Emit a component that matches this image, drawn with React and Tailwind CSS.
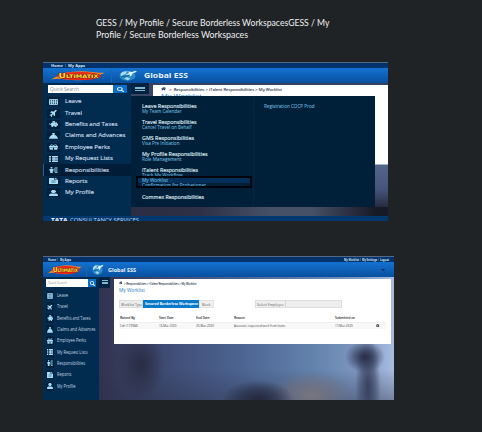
import React, { useLayoutEffect, useRef, useState } from "react";
import { FaPlane, FaPiggyBank, FaGift, FaUser, FaSearch, FaHome, FaFileAlt, FaCog } from "react-icons/fa";

// A single line of text set to a fixed measure.
function Fit({ w, className = "", children }) {
  const ref = useRef(null);
  const [scale, setScale] = useState(1);
  useLayoutEffect(() => {
    if (ref.current && ref.current.offsetWidth) {
      const own = getComputedStyle(ref.current).width;
      setScale(w / parseFloat(own));
    }
  }, [w, children]);
  return (
    <span className="block shrink-0" style={{ width: w }}>
      <span
        ref={ref}
        className={"block w-max origin-left whitespace-nowrap " + className}
        style={{ transform: `scaleX(${scale})` }}
      >
        {children}
      </span>
    </span>
  );
}

function CalendarIcon({ className }) {
  return (
    <svg viewBox="0 0 18 14" preserveAspectRatio="none" className={className} fill="none" stroke="currentColor" strokeWidth="2">
      <path d="M1 1h16v12H1zM1 5h16M1 9h16M5 1v12M9 1v12M13 1v12" />
    </svg>
  );
}

function ClaimsIcon({ className }) {
  return (
    <svg viewBox="0 0 18 16" preserveAspectRatio="none" className={className} fill="currentColor">
      <path d="M6 0h6l-1.5 4C15 6 17 10 18 15H0C1 10 3 6 7.500 4z" />
    </svg>
  );
}

function ListIcon({ className }) {
  return (
    <svg viewBox="0 0 18 16" preserveAspectRatio="none" className={className} fill="currentColor">
      <path d="M0 0h4v4H0zM0 6h4v4H0zM0 12h4v4H0zM6 0h12v4H6zM6 6h12v4H6zM6 12h12v4H6z" />
      <path d="M9 0h2v16H9z" />
    </svg>
  );
}

function DutiesIcon({ className }) {
  return (
    <svg viewBox="0 0 18 16" preserveAspectRatio="none" className={className} fill="currentColor">
      <circle cx="5" cy="2.200" r="2.200" />
      <path d="M1 5h8v5H7.500v6h-5v-6H1zM12 1h5v3h-5zM12 6.500h5v3h-5zM12 12h5v3h-5z" />
      <path d="M10 2h1v12h-1z" />
    </svg>
  );
}

function Stretch({ icon: Icon, className }) {
  return <Icon preserveAspectRatio="none" className={className} />;
}

function MenuIcon({ name, className }) {
  if (name === "leave") return <CalendarIcon className={className} />;
  if (name === "claims") return <ClaimsIcon className={className} />;
  if (name === "list") return <ListIcon className={className} />;
  if (name === "duties") return <DutiesIcon className={className} />;
  const icons = { travel: FaPlane, benefits: FaPiggyBank, perks: FaGift, reports: FaFileAlt, profile: FaUser };
  return <Stretch icon={icons[name]} className={className + (name === "travel" ? " -rotate-45" : "")} />;
}

const items = [
  ["leave", "Leave", 16.5, 11],
  ["travel", "Travel", 17, 11],
  ["benefits", "Benefits and Taxes", 52.5, 33.5],
  ["claims", "Claims and Advances", 60.5, 38.5],
  ["perks", "Employee Perks", 45, 29],
  ["list", "My Request Lists", 48, 30.5],
  ["duties", "Responsibilities", 44, 28],
  ["reports", "Reports", 22.5, 14.5],
  ["profile", "My Profile", 29, 18.5],
];

function Ultimatix({ className }) {
  return (
    <svg viewBox="0 0 54 11" preserveAspectRatio="none" className={className}>
      <path d="M0 9Q8 5 14 2Q28-1 41 1Q47 2 54 2Q48 4 45 7Q34 12 14 9Q7 8 0 9Z" fill="#f58a22" />
      <ellipse cx="28" cy="5.500" rx="22" ry="4.500" fill="#e5281b" />
      <text
        x="7.500" y="8.200" textLength="40" lengthAdjust="spacingAndGlyphs"
        fontFamily="DejaVu Sans, sans-serif" fontWeight="bold" fontSize="7.500"
        fill="#ffe33b" stroke="#5a1708" strokeWidth=".7" paintOrder="stroke" className="[font-variant:small-caps]"
      >
        Ultimatix
      </text>
    </svg>
  );
}

function Globe({ className }) {
  return (
    <svg viewBox="0 0 18 12" preserveAspectRatio="none" className={className}>
      <ellipse cx="8.500" cy="6.300" rx="8" ry="5.400" fill="#2a8dc8" />
      <path d="M1.500 4Q4 1 8 1.500L7 4 4 5.500 2 7zM5 9l3-1 3 1-2 2.500z" fill="#a9dcf2" />
      <path d="M2 7.500Q9 8 15 2.500" fill="none" stroke="#0d4f94" strokeWidth=".8" />
      <path d="M18 1.800L14 3.500 12 6.500 10.500 7 11 5 6 5.500 10.500 3 8 1.500 13 2.200 16 .8z" fill="#e4f6ff" />
    </svg>
  );
}

function Burger({ className }) {
  return (
    <span className={"flex flex-col justify-between " + className}>
      <span className="h-px bg-[#86b5ce]" />
      <span className="h-px bg-[#86b5ce]" />
      <span className="h-px bg-[#86b5ce]" />
    </span>
  );
}

function WideSidebar() {
  return (
    <aside className="flex h-[133px] w-[88px] shrink-0 flex-col bg-[#012c4f] pt-[2px]">
      <div className="ml-[5px] flex h-2 w-[79px]">
        <div className="flex w-[65px] items-center bg-white pl-[2px]">
          <Fit w={29} className="text-[4.5px] leading-[8px] text-[#8b8f94]">Quick Search</Fit>
        </div>
        <div className="flex flex-1 items-center justify-center bg-[#0b6fca]">
          <Stretch icon={FaSearch} className="h-[5px] w-[7px] text-white" />
        </div>
      </div>
      <nav className="mt-[3px] flex flex-col">
        {items.map(([icon, label, w]) => (
          <div
            key={label}
            className={
              "flex h-[11.4px] items-center border-l pl-[3px] " +
              (icon === "duties" ? "border-[#1668ad] bg-[#001c36]" : "border-transparent")
            }
          >
            <span className="mr-[4.5px] flex h-[9px] w-[13px] items-center justify-center bg-[#001f3b]">
              <MenuIcon name={icon} className="h-[6px] w-[9px] text-[#a5dcf7]" />
            </span>
            <Fit w={w} className="text-[5.5px] leading-[11px] text-[#c6d8e6] [-webkit-text-stroke:0.15px]">{label}</Fit>
          </div>
        ))}
      </nav>
    </aside>
  );
}

const groups = [
  ["Leave Responsibilities", 54.5, "My Team Calendar", 39.5],
  ["Travel Responsibilities", 54.5, "Cancel Travel on Behalf", 49.5],
  ["GMS Responsibilities", 52, "Visa Pre Initiation", 37.5],
  ["My Profile Responsibilities", 65.5, "Role Management", 39.5],
];
const headText = "text-[4.7px] leading-[5px] text-[#d9e5ee] [-webkit-text-stroke:0.15px]";
const linkText = "text-[4.5px] leading-[5px] text-[#6cb5df] [-webkit-text-stroke:0.08px]";

function MegaMenu() {
  return (
    <div className="absolute left-[88px] top-[34px] flex h-[111px] w-[244px] bg-[#001f38]">
      <div className="flex w-[123px] flex-col border-r border-[#032743] pt-[7.5px]">
        {groups.map(([head, hw, link, lw]) => (
          <div key={head} className="h-[16.2px] pl-[10.5px]">
            <Fit w={hw} className={headText}>{head}</Fit>
            <Fit w={lw} className={linkText}>{link}</Fit>
          </div>
        ))}
        <div className="h-[8px] overflow-hidden pl-[10.5px]">
          <Fit w={56} className={headText}>iTalent Responsibilities</Fit>
          <Fit w={40.5} className={linkText}>Track My Workflow</Fit>
        </div>
        <div className="ml-[5px] h-[12px] w-[116px] shrink-0 overflow-hidden border-2 border-[#00040b] bg-[#001f38]">
          <div className="flex h-[5px] items-center bg-[#03305a] pl-[3.5px]">
            <Fit w={26} className={linkText}>My Worklist</Fit>
            <span className="ml-[3px] text-[4px] leading-[4px] text-[#3d86b8]">›</span>
          </div>
          <div className="pl-[3.5px]">
            <Fit w={64} className={linkText}>Confirmation for Probationer</Fit>
          </div>
        </div>
        <div className="pl-[10.5px] pt-[6.5px]">
          <Fit w={62} className={headText}>Commex Responsibilities</Fit>
        </div>
      </div>
      <div className="pl-[10px] pt-[8px]">
        <Fit w={50.5} className={linkText}>Registration COCP Prod</Fit>
      </div>
    </div>
  );
}

function MenuShot() {
  return (
    <section className="relative flex h-[158.5px] w-[345px] flex-col overflow-hidden bg-[#353b58]">
      <div className="flex h-[6px] shrink-0 items-center border-t border-[#526883] bg-[#01326b] pl-[7.5px]">
        <Fit w={12} className="text-[3.8px] font-bold leading-[5px] text-[#d8e6f3]">Home</Fit>
        <span className="ml-[2.5px] mr-[2px] h-[3px] w-px bg-[#315e8c]" />
        <Fit w={17} className="text-[3.8px] font-bold leading-[5px] text-[#d8e6f3]">My Apps</Fit>
      </div>
      <header className="flex h-[15px] shrink-0 items-center bg-gradient-to-b from-[#1472d2] to-[#08509f] pl-[8px]">
        <Ultimatix className="h-[10px] w-[54px]" />
        <span className="ml-[6px] mr-[7px] h-full w-px bg-[#1767b3]" />
        <Globe className="h-[11px] w-[18px]" />
        <span className="w-[6.5px]" />
        <Fit w={44} className="text-[6.5px] font-bold leading-[10px] text-[#e9f3ff]">Global ESS</Fit>
      </header>
      <div className="flex h-[133px] shrink-0 bg-[linear-gradient(180deg,#38405f_0%,#536689_61%,#46547b_80%,#151621_100%)]">
        <WideSidebar />
        <div className="flex h-[11px] w-[18px] items-center justify-center bg-[#002344]">
          <Burger className="h-[4px] w-[10px]" />
        </div>
        <div className="flex flex-1 flex-col pl-[4px] pt-[2px]">
          <div className="h-[79.5px] border-b border-[#a6b2c6] bg-white pl-[8px] pt-[1.500px]">
            <div className="flex h-[5px] items-center">
              <Stretch icon={FaHome} className="mr-[3px] h-[3.5px] w-[5px] text-[#123453]" />
              <Fit w={113} className="text-[4.100px] leading-[5px] text-[#263247] [-webkit-text-stroke:0.1px]">
                &gt;&nbsp; Responsibilities &gt; iTalent Responsibilities &gt; My Worklist
              </Fit>
            </div>
            <Fit w={41} className="pt-px text-[6px] leading-[6px] text-[#1c78bf]">My Worklist</Fit>
          </div>
          <div className="-ml-[22px] mt-auto h-[9px] w-[257px] bg-[linear-gradient(90deg,#2b2d42_0%,#2e3147_28%,#465168_55%,#465168_70%,#171927_95%)]" />
        </div>
      </div>
      <footer className="flex flex-1 items-start overflow-hidden bg-[#00386f] pl-[7.5px] pt-[1.500px]">
        <Fit w={16.5} className="text-[5px] font-bold leading-[5px] text-white">TATA</Fit>
        <span className="w-[3px]" />
        <Fit w={69} className="text-[5px] leading-[5px] text-[#c2d9ed]">CONSULTANCY SERVICES</Fit>
      </footer>
      <MegaMenu />
    </section>
  );
}

function NarrowSidebar() {
  return (
    <aside className="flex w-[56px] shrink-0 flex-col bg-[#012c4f] pt-[2px]">
      <div className="ml-[3px] flex h-2 w-[50px]">
        <div className="flex w-[42px] items-center bg-white pl-[2px]">
          <Fit w={19} className="text-[4px] leading-[8px] text-[#8b8f94]">Quick Search</Fit>
        </div>
        <div className="flex flex-1 items-center justify-center bg-[#0b6fca]">
          <FaSearch className="h-[5px] w-[5px] text-white" />
        </div>
      </div>
      <nav className="mt-[3px] flex flex-col">
        {items.map(([icon, label, , w]) => (
          <div key={label} className="flex h-[11.3px] items-center pl-[3px]">
            <span className="mr-[3px] flex h-[9px] w-[8px] items-center justify-center bg-[#001f3b]">
              <MenuIcon name={icon} className="h-[6px] w-[6px] text-[#a5dcf7]" />
            </span>
            <Fit w={w} className="text-[5px] leading-[11px] text-[#c6d8e6]">{label}</Fit>
          </div>
        ))}
      </nav>
    </aside>
  );
}

function Cells({ cells, className }) {
  return (
    <div className={"grid h-[7px] grid-cols-[38.5px_37.500px_37.500px_101px_1fr_10px] items-center pl-[1.500px] text-[4px] leading-[6px] " + className}>
      {cells.map(([text, w]) => (
        <Fit key={text} w={w}>{text}</Fit>
      ))}
      {cells[0][0] !== "Raised By" && <FaCog className="h-[3.5px] w-[3.5px]" />}
    </div>
  );
}

function WorklistCard() {
  return (
    <div className="mt-[2px] h-[65px] w-[277.500px] shrink-0 bg-white pl-[5px] pr-[5px] pt-[1.500px]">
      <div className="flex h-[5px] items-center">
        <FaHome className="mr-[1.500px] h-[3.5px] w-[3.5px] text-[#123453]" />
        <Fit w={72.5} className="text-[3.500px] leading-[5px] text-[#263247] [-webkit-text-stroke:0.08px]">
          &gt; Responsibilities &gt; iTalent Responsibilities &gt; My Worklist
        </Fit>
      </div>
      <Fit w={26} className="pt-px text-[5.300px] leading-[6px] text-[#2479c0]">My Worklist</Fit>
      <div className="mt-[7px] flex h-[8px]">
        <div className="flex w-[24.500px] items-center border border-[#dedede] bg-[#ededed] pl-[1px]">
          <Fit w={21.5} className="text-[4.300px] leading-[6px] text-[#666]">Worklist Type</Fit>
        </div>
        <div className="flex w-[56px] items-center bg-[#087ac9] pl-[1.500px]">
          <Fit w={53} className="text-[4.200px] font-bold leading-[6px] text-white">Secured Borderless Workspace</Fit>
        </div>
        <div className="flex w-[15px] items-center border border-[#e3e3e3] bg-[#f0f0f0] pl-[2px]">
          <Fit w={8.5} className="text-[4.300px] leading-[6px] text-[#666]">Back</Fit>
        </div>
        <div className="ml-[41px] flex w-[87px] border border-[#dedede] bg-[#eeeeee]">
          <div className="flex w-[30px] items-center border-r border-[#d7d7d7] pl-[1px]">
            <Fit w={27} className="text-[4.300px] leading-[6px] text-[#666]">Select Employee</Fit>
          </div>
        </div>
      </div>
      <Cells
        className="mt-[7px] text-[#333] [-webkit-text-stroke:0.12px]"
        cells={[["Raised By", 15], ["Start Date", 14.5], ["End Date", 13.5], ["Reason", 11], ["Submitted on", 20]]}
      />
      <Cells
        className="border-t border-[#f0f0f0] bg-[#f8f8f8] text-[#444]"
        cells={[["Cdr (119984)", 18], ["16-Mar-2020", 17.5], ["20-Mar-2020", 18], ["Associate requested work from home", 51.500], ["17-Mar-2020", 17.600]]}
      />
    </div>
  );
}

function WorklistShot() {
  const bar = "text-[3.500px] font-bold leading-[5px] text-[#d8e6f3]";
  return (
    <section className="flex h-[144px] w-[351px] flex-col overflow-hidden">
      <div className="flex h-[6px] shrink-0 items-center border-t border-[#526883] bg-[#01326b] pl-[5px] pr-[5px]">
        <Fit w={8} className={bar}>Home</Fit>
        <span className="ml-[1px] mr-[2px] h-[3px] w-px bg-[#315e8c]" />
        <Fit w={11} className={bar}>My Apps</Fit>
        <span className="flex-1" />
        <Fit w={15} className={bar}>My Worklist</Fit>
        <span className="mx-[1px] h-[3px] w-px bg-[#315e8c]" />
        <Fit w={15} className={bar}>My Settings</Fit>
        <span className="mx-[1px] h-[3px] w-px bg-[#315e8c]" />
        <Fit w={9} className={bar}>Logout</Fit>
      </div>
      <header className="flex h-[15px] shrink-0 items-center bg-gradient-to-b from-[#1472d2] to-[#08509f] pl-[5px]">
        <Ultimatix className="h-[10px] w-[34px]" />
        <span className="ml-[4px] mr-[5px] h-full w-px bg-[#1767b3]" />
        <Globe className="h-[11px] w-[11.5px]" />
        <span className="w-[4px]" />
        <Fit w={28} className="text-[6px] font-bold leading-[10px] text-[#e9f3ff]">Global ESS</Fit>
        <span className="ml-auto mr-[9px] h-0 w-0 border-x-[2px] border-t-[2px] border-x-transparent border-t-[#032a5a]" />
      </header>
      <div className="flex min-h-0 flex-1 bg-[radial-gradient(ellipse_20px_16px_at_322px_80px,#2c3350_10%,#2c335099_50%,#2c335000_100%),radial-gradient(ellipse_13px_52px_at_325px_112px,#3b4562_10%,#3b456299_55%,#3b456200_100%),radial-gradient(ellipse_36px_20px_at_215px_123px,#262a40_10%,#262a4099_55%,#262a4000_100%),radial-gradient(ellipse_42px_24px_at_268px_118px,#77747f_5%,#77747f88_55%,#77747f00_100%),radial-gradient(ellipse_24px_34px_at_98px_88px,#292d45_5%,#292d4588_50%,#292d4500_100%),linear-gradient(180deg,#2a304800_75%,#2a304866_100%),linear-gradient(90deg,#31334f_16%,#3e4b72_34%,#4b6290_55%,#6384ae_78%,#7f97c0_90%,#a9bcdf_100%)]">
        <NarrowSidebar />
        <div className="flex h-[10.5px] w-[11px] shrink-0 items-center justify-center bg-[#002344]">
          <Burger className="h-[4px] w-[6px]" />
        </div>
        <div className="w-[3.500px] shrink-0" />
        <WorklistCard />
      </div>
    </section>
  );
}

export default function App() {
  return (
    <main className="flex h-[432px] w-[482px] flex-col overflow-hidden bg-[#1f2326] pl-[43px] pt-[17px] font-['Open_Sans','Noto_Sans',sans-serif]">
      <h1 className="h-[45px] shrink-0 pl-[52.5px] font-['Lato','Open_Sans',sans-serif] text-[9.5px] font-normal leading-[12px] text-[#f1f1f1]">
        <Fit w={233.5}>GESS / My Profile / Secure Borderless WorkspacesGESS / My</Fit>
        <Fit w={152}>Profile / Secure Borderless Workspaces</Fit>
      </h1>
      <MenuShot />
      <div className="h-[35.5px] shrink-0" />
      <WorklistShot />
    </main>
  );
}
